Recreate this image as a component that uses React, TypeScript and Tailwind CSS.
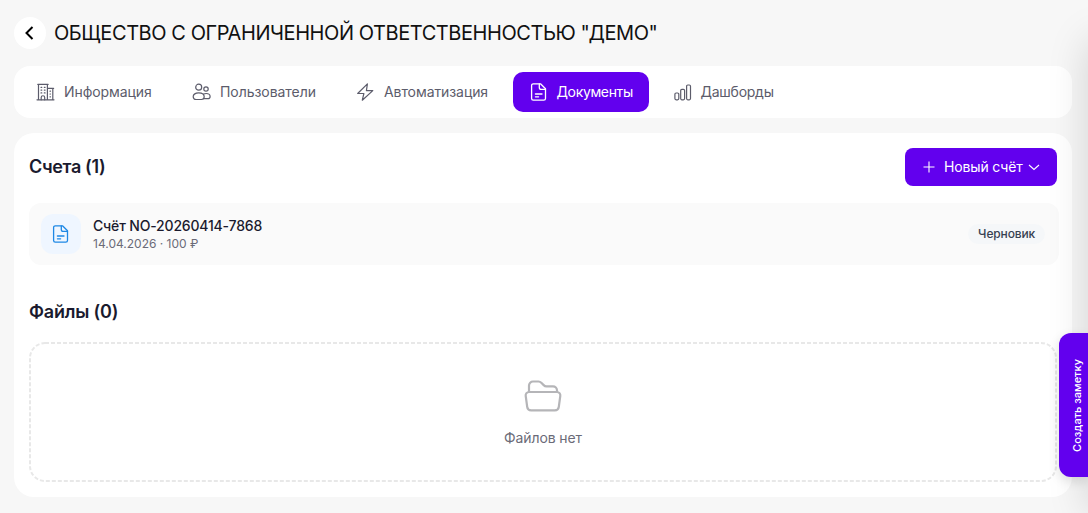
import type { ReactNode } from 'react'

const iconProps = {
  viewBox: '0 0 20 20',
  fill: 'none',
  stroke: 'currentColor',
  strokeLinecap: 'round' as const,
  strokeLinejoin: 'round' as const,
}

function BuildingIcon() {
  return (
    <svg {...iconProps} strokeWidth={1.2} className="size-5 shrink-0">
      <path d="M1 17.8h17M2.500 17.800V2.400h8.900v15.400M1.800 2.400h10.300M11.400 6.400h5.400v11.400M11.400 6.400h6.200" />
      <path d="M5.200 17.800v-2.300a1.700 1.700 0 0 1 3.500 0v2.300" />
      <path d="M5 5.300h.8M8.300 5.300h.8M5 8.100h.8M8.300 8.100h.8M5 10.900h.8M8.300 10.900h.8M14 9.200h.5M14 12h.5M14 14.800h.5" />
    </svg>
  )
}

function UsersIcon() {
  return (
    <svg {...iconProps} strokeWidth={1.2} className="size-5 shrink-0">
      <circle cx="6.700" cy="5.200" r="3" />
      <circle cx="14" cy="7" r="2.200" />
      <path d="M1.200 14.800c0-2.400 2.300-4 5.500-4s5.500 1.600 5.500 4c0 1.700-1.200 2.700-2.700 2.700H3.900c-1.500 0-2.700-1-2.700-2.700Z" />
      <path d="M11.700 12.100c.7-.4 1.500-.6 2.400-.6 2.300 0 4 1.200 4 2.900 0 1.300-.9 2.200-2.100 2.200h-4.500" />
    </svg>
  )
}

function BoltIcon() {
  return (
    <svg {...iconProps} strokeWidth={1.2} className="size-5 shrink-0">
      <path d="M11.400 1.800 1.700 11.500h6.200L6.300 18.200l10.500-9.600h-6.400l1-6.800Z" />
    </svg>
  )
}

function DocumentIcon({ className }: { className: string }) {
  return (
    <svg {...iconProps} strokeWidth={1.3} className={className}>
      <path d="M11.500 1.800H4.300A1.700 1.700 0 0 0 2.600 3.500v13a1.700 1.700 0 0 0 1.700 1.700h10.500a1.700 1.700 0 0 0 1.700-1.700V6.800l-5-5Z" />
      <path d="M10.300 1.800v3.600a1.900 1.900 0 0 0 1.900 1.900h4.300M6.400 12h6.600M6.400 14.800h3.200" />
    </svg>
  )
}

function ChartIcon() {
  return (
    <svg {...iconProps} strokeWidth={1.2} className="size-5 shrink-0">
      <rect x="1.900" y="11" width="3.900" height="6.800" rx="1.200" />
      <rect x="7.700" y="7.300" width="3.900" height="10.500" rx="1.200" />
      <rect x="13.600" y="3" width="3.900" height="14.800" rx="1.200" />
    </svg>
  )
}

type Tab = { label: string; icon: ReactNode; width: string; text: string }

const TABS: Tab[] = [
  { label: 'Информация', icon: <BuildingIcon />, width: 'w-[148px]', text: 'tracking-[-0.08px]' },
  { label: 'Пользователи', icon: <UsersIcon />, width: 'w-[156px]', text: 'tracking-[-0.05px]' },
  { label: 'Автоматизация', icon: <BoltIcon />, width: 'w-[164.500px]', text: 'tracking-[-0.08px]' },
  { label: 'Документы', icon: <DocumentIcon className="size-5 shrink-0" />, width: 'w-[136px]', text: 'tracking-[-0.35px]' },
  { label: 'Дашборды', icon: <ChartIcon />, width: 'w-[133px]', text: 'tracking-[-0.25px]' },
]

export default function App() {
  const active = 'Документы'

  return (
    <div className="relative h-[513px] w-[1088px] overflow-hidden bg-[#f7f7f7] font-['Inter',sans-serif] text-[#1a1a2e]">
      <header className="flex h-[66px] items-center gap-2 pl-3.5">
        <button type="button" className="flex size-8 items-center justify-center rounded-full bg-white text-black">
          <svg viewBox="0 0 16 16" fill="none" stroke="currentColor" strokeWidth="2" className="size-4">
            <path d="M10.500 2 4.500 8l6 6" />
          </svg>
        </button>
        <h1 className="whitespace-nowrap text-xl tracking-[-0.43px] text-[#111]">
          ОБЩЕСТВО С ОГРАНИЧЕННОЙ ОТВЕТСТВЕННОСТЬЮ "ДЕМО"
        </h1>
      </header>

      <nav className="ml-3.5 flex h-[52px] w-[1058px] items-center gap-2 rounded-2xl bg-white px-1.5">
        {TABS.map((tab) => (
          <button
            key={tab.label}
            type="button"
            className={`flex h-10 items-center gap-2 whitespace-nowrap rounded-[10px] px-4 text-sm ${tab.width} ${tab.text} ${
              tab.label === active ? 'bg-[#6200ee] text-white' : 'text-[#5c5c6b]'
            }`}
          >
            {tab.icon}
            <span>{tab.label}</span>
          </button>
        ))}
      </nav>

      <main className="mt-[15px] ml-3.5 h-[364px] w-[1058px] rounded-[20px] bg-white p-[15px]">
        <div className="flex h-[38px] items-center justify-between">
          <h2 className="text-lg font-semibold tracking-[-0.35px]">Счета (1)</h2>
          <button type="button" className="flex h-[38px] w-[152px] items-center whitespace-nowrap rounded-lg bg-[#6200ee] pl-[17px] text-sm text-white">
            <svg viewBox="0 0 14 14" fill="none" stroke="currentColor" strokeWidth="1.1" className="mr-2 size-3.5">
              <path d="M7 1.500v11M1.500 7h11" />
            </svg>
            <span className="tracking-[-0.15px]">Новый счёт</span>
            <svg viewBox="0 0 12 12" fill="none" stroke="currentColor" strokeWidth="1.1" className="ml-[5px] size-3">
              <path d="m1 4 5 4.500L11 4" />
            </svg>
          </button>
        </div>

        <div className="mt-[17px] flex h-[62px] w-[1030px] items-center rounded-xl bg-[#fafafa] pr-3.5 pl-3">
          <div className="flex size-10 items-center justify-center rounded-xl bg-[#eff6ff] text-[#1e88e5]">
            <DocumentIcon className="size-5" />
          </div>
          <div className="ml-3 flex-1">
            <p className="text-sm leading-5 font-medium tracking-[-0.18px]">Счёт NO-20260414-7868</p>
            <p className="text-xs leading-4 text-[#6b6b78]">14.04.2026 · 100 ₽</p>
          </div>
          <span className="rounded-full bg-[#f5f7f9] px-2.5 py-0.5 text-xs font-medium tracking-[-0.15px] text-[#374151]">Черновик</span>
        </div>

        <h2 className="mt-[33px] text-lg font-semibold tracking-[-0.2px]">Файлы (0)</h2>

        <div className="relative mt-4 flex h-[140px] flex-col items-center pt-[34px]">
          {/* dashed outline, 4px dashes with 2px gaps */}
          <svg viewBox="0 0 1028 140" fill="none" className="absolute inset-0 size-full">
            <rect x="1" y="1" width="1026" height="138" rx="15" stroke="#e8e8e8" strokeWidth="2" strokeDasharray="4 2" />
          </svg>
          <svg viewBox="0 0 40 40" fill="none" stroke="#b5b5b8" strokeWidth="2.200" strokeLinejoin="round" className="size-10">
            <path d="M6 16V9.500A4 4 0 0 1 10 5.500h5.500c1.100 0 2 .4 2.800 1.200l2.400 2.400c.8.800 1.700 1.200 2.800 1.200H30a4 4 0 0 1 4 4V16" />
            <path d="M6 16h28a3.300 3.300 0 0 1 3.300 3.800l-1.500 11a4 4 0 0 1-4 3.500H8.200a4 4 0 0 1-4-3.500l-1.500-11A3.300 3.300 0 0 1 6 16Z" />
          </svg>
          <p className="mt-3 text-sm tracking-[-0.1px] text-[#6b6b78]">Файлов нет</p>
        </div>
      </main>

      <div className="absolute top-[40px] -right-[100px] h-[473px] w-[100px] shadow-[0_0_40px_rgba(0,0,0,0.15)]" />

      <button
        type="button"
        className="absolute top-[333px] right-0 flex h-36 w-[29px] items-center justify-center rounded-l-xl bg-[#6200ee] pl-[7px] text-white shadow-[0_4px_12px_rgba(0,0,0,0.12)]"
      >
        <span className="rotate-180 whitespace-nowrap text-[11px] font-medium [writing-mode:vertical-rl]">Создать заметку</span>
      </button>
    </div>
  )
}
